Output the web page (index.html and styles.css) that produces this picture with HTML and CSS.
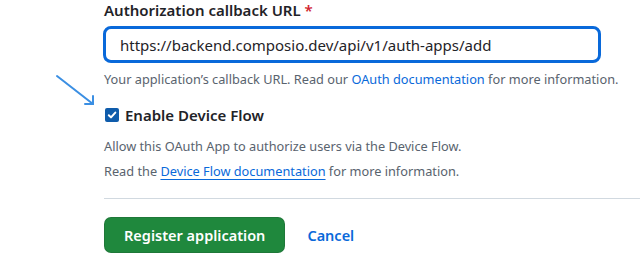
FILE: index.html
```html
<!DOCTYPE html>
<html lang="en">
<head>
    <meta charset="UTF-8">
    <meta name="viewport" content="width=device-width, initial-scale=1.0">
    <title>Register a new OAuth app</title>
    <link rel="stylesheet" href="styles.css">
</head>
<body>
    <svg class="pointer-arrow" width="44" height="36" viewBox="0 0 44 36" fill="none" stroke="#3b8fe3" stroke-width="2" stroke-linecap="round">
        <path d="M2 2L38 30"></path>
        <path d="M38 30L30 30"></path>
        <path d="M38 30L38 22"></path>
    </svg>

    <form class="app-form">
        <div class="form-group">
            <label class="form-label" for="callbackUrl">Authorization callback URL <span class="required">*</span></label>
            <input class="form-input" id="callbackUrl" type="text" value="https://backend.composio.dev/api/v1/auth-apps/add">
            <p class="note">Your application’s callback URL. Read our <a href="#">OAuth documentation</a> for more information.</p>
        </div>

        <div class="form-check">
            <label class="check-label">
                <span class="check-box">
                    <svg width="10" height="10" viewBox="0 0 10 10" fill="none" stroke="#fff" stroke-width="2" stroke-linecap="round" stroke-linejoin="round">
                        <path d="M1.8 5.2L4 7.4L8.3 2.6"></path>
                    </svg>
                </span>
                Enable Device Flow
            </label>
            <p class="note">Allow this OAuth App to authorize users via the Device Flow.</p>
            <p class="note">Read the <a class="underlined" href="#">Device Flow documentation</a> for more information.</p>
        </div>

        <hr class="divider">

        <div class="form-actions">
            <button class="btn-primary" type="button">Register application</button>
            <a class="btn-link" href="#">Cancel</a>
        </div>
    </form>
</body>
</html>
```

FILE: styles.css
```css
:root {
    --text: #1f2328;
    --text-light: #59636e;
    --link: #0969da;
    --green: #1f883d;
    --border: #d1d9e0;
}

* {
    margin: 0;
    padding: 0;
    box-sizing: border-box;
}

body {
    font-family: 'Noto Sans', 'Liberation Sans', sans-serif;
    color: var(--text);
    background: #ffffff;
    position: relative;
    height: 279px;
    overflow: hidden;
}

.pointer-arrow {
    position: absolute;
    left: 55px;
    top: 74px;
}

.app-form {
    padding-left: 104px;
}

.form-group {
    white-space: nowrap;
}

.form-label {
    display: block;
    font-size: 15px;
    font-weight: 600;
    line-height: 20px;
    margin-bottom: 6px;
}

.required {
    color: #d1242f;
}

.form-input {
    display: block;
    width: 498px;
    height: 37px;
    margin-left: -1px;
    padding: 0 14px;
    font-family: inherit;
    font-size: 15px;
    color: var(--text);
    border: 3px solid var(--link);
    border-radius: 8px;
    outline: none;
}

.note {
    font-size: 12.75px;
    line-height: 25px;
    color: var(--text-light);
}

.note a {
    color: var(--link);
    text-decoration: none;
}

.note a.underlined {
    text-decoration: underline;
    text-underline-offset: 3px;
}

.form-group .note {
    margin-top: 4px;
}

.form-check {
    margin-top: 12px;
}

.check-label {
    display: flex;
    align-items: center;
    gap: 6px;
    font-size: 15px;
    font-weight: 600;
    line-height: 22px;
    margin-bottom: 8px;
}

.check-box {
    width: 14px;
    height: 14px;
    margin-left: 1px;
    border-radius: 2px;
    background: #0f5cab;
    display: flex;
    align-items: center;
    justify-content: center;
}

.divider {
    border: 0;
    border-top: 1px solid var(--border);
    margin-top: 14px;
}

.form-actions {
    display: flex;
    align-items: center;
    gap: 22px;
    margin-top: 18px;
}

.btn-primary {
    height: 36px;
    padding: 0 19px;
    font-family: inherit;
    font-size: 14.5px;
    font-weight: 600;
    color: #ffffff;
    background: var(--green);
    border: 1px solid rgba(31, 35, 40, 0.15);
    border-radius: 7px;
}

.btn-link {
    font-size: 14.5px;
    font-weight: 600;
    color: var(--link);
    text-decoration: none;
}
```
